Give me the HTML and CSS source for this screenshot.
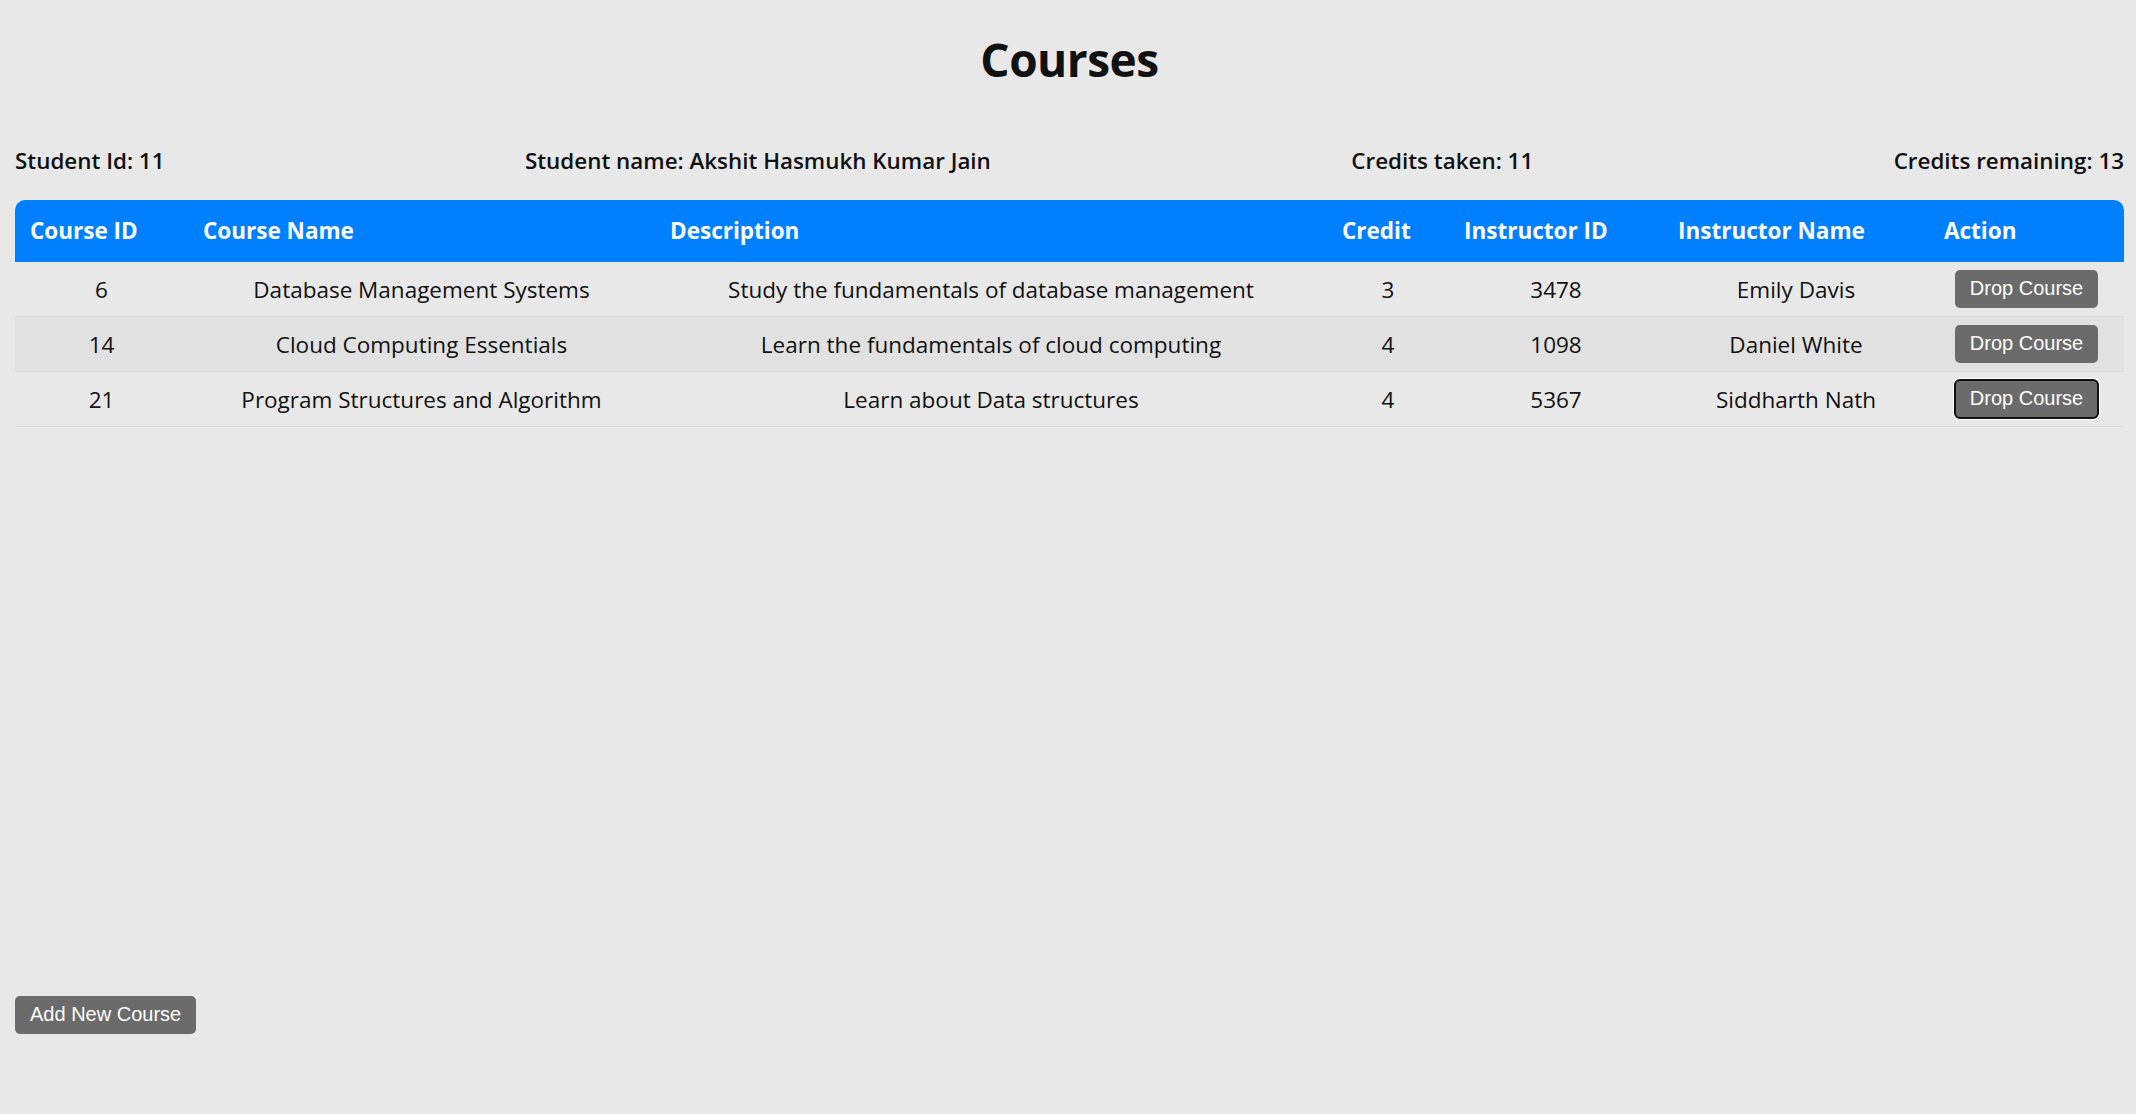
FILE: index.html
```html
<!DOCTYPE html>
<html lang="en">
<head>
<meta charset="utf-8">
<title>Courses</title>
<link rel="stylesheet" href="styles.css">
</head>
<body>
<main class="page">
  <h1 class="title">Courses</h1>
  <div class="info">
    <span>Student Id: 11</span>
    <span>Student name: Akshit Hasmukh Kumar Jain</span>
    <span>Credits taken: 11</span>
    <span>Credits remaining: 13</span>
  </div>
  <table class="courses">
    <thead>
      <tr>
        <th class="c-id">Course ID</th>
        <th class="c-name">Course Name</th>
        <th class="c-desc">Description</th>
        <th class="c-credit">Credit</th>
        <th class="c-iid">Instructor ID</th>
        <th class="c-iname">Instructor Name</th>
        <th class="c-action">Action</th>
      </tr>
    </thead>
    <tbody>
      <tr>
        <td>6</td>
        <td>Database Management Systems</td>
        <td>Study the fundamentals of database management</td>
        <td>3</td>
        <td>3478</td>
        <td>Emily Davis</td>
        <td><button class="btn">Drop Course</button></td>
      </tr>
      <tr>
        <td>14</td>
        <td>Cloud Computing Essentials</td>
        <td>Learn the fundamentals of cloud computing</td>
        <td>4</td>
        <td>1098</td>
        <td>Daniel White</td>
        <td><button class="btn">Drop Course</button></td>
      </tr>
      <tr>
        <td>21</td>
        <td>Program Structures and Algorithm</td>
        <td>Learn about Data structures</td>
        <td>4</td>
        <td>5367</td>
        <td>Siddharth Nath</td>
        <td><button class="btn btn-focus">Drop Course</button></td>
      </tr>
    </tbody>
  </table>
  <div class="footer">
    <button class="btn">Add New Course</button>
  </div>
</main>
</body>
</html>
```

FILE: styles.css
```css
* { box-sizing: border-box; }

html, body {
  margin: 0;
  padding: 0;
  background: #e8e8e8;
}

body {
  font-family: "Open Sans", "Noto Sans", sans-serif;
  color: #111;
}

.page {
  min-height: 100vh;
  display: flex;
  flex-direction: column;
  padding: 0 12px 80px 15px;
}

.title {
  margin: 0;
  padding-top: 27px;
  text-align: center;
  font-size: 46px;
  font-weight: 700;
  line-height: 64px;
  letter-spacing: -0.5px;
}

.info {
  display: flex;
  justify-content: space-between;
  margin-top: 55px;
  font-size: 22.4px;
  font-weight: 600;
  line-height: 30px;
}

.courses {
  margin-top: 24px;
  width: 100%;
  border-collapse: separate;
  border-spacing: 0;
  font-size: 22.5px;
}

.courses th {
  background: #0080ff;
  color: #fff;
  text-align: left;
  font-weight: 700;
  padding: 15px 15px;
  line-height: 32px;
}

.courses th:first-child { border-top-left-radius: 10px; }
.courses th:last-child { border-top-right-radius: 10px; }

.c-id { width: 173px; }
.c-name { width: 467px; }
.c-desc { width: 672px; }
.c-credit { width: 122px; }
.c-iid { width: 214px; }
.c-iname { width: 266px; }
.c-action { width: 195px; }

.courses td {
  text-align: center;
  padding: 9px 15px 7px;
  line-height: 30px;
  border-bottom: 1px solid #dcdcdc;
  height: 54px;
}

.courses td:last-child {
  padding-top: 8px;
  padding-bottom: 8px;
}

.courses tbody tr:nth-child(even) td {
  background: #e1e1e1;
}

.btn {
  font-family: "Liberation Sans", Arial, sans-serif;
  font-size: 20px;
  line-height: 23px;
  color: #fff;
  background: #6b6b6b;
  border: none;
  border-radius: 5px;
  padding: 7px 15px 8px;
  cursor: pointer;
}

.btn-focus {
  outline: 2px solid #111;
  outline-offset: -1px;
  box-shadow: 0 0 0 2px #fff;
}

.footer {
  margin-top: auto;
}
```
